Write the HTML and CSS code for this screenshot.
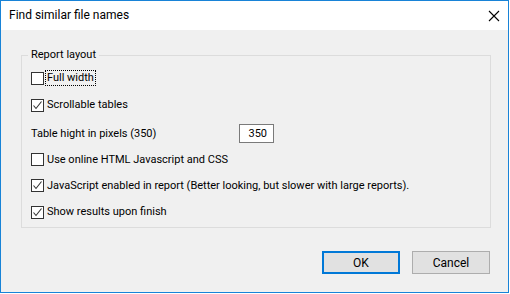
FILE: index.html
```html
<!DOCTYPE html>
<html>
<head>
<meta charset="utf-8">
<link rel="stylesheet" href="styles.css">
</head>
<body>
<div class="window">
  <div class="titlebar">
    <span class="title">Find similar file names</span>
    <svg class="close" width="12" height="12" viewBox="0 0 12 12"><path d="M1 1L11 11M11 1L1 11" stroke="#000" stroke-width="1.1" fill="none"/></svg>
  </div>
  <div class="content">
    <div class="group">
      <span class="legend">Report layout</span>
      <div class="rows">
        <label class="row"><span class="box"></span><span class="text focus">Full width</span></label>
        <label class="row"><span class="box"><svg width="11" height="11" viewBox="0 0 11 11"><path d="M1.5 5.5L4 8.5L9.5 1.5" stroke="#333" stroke-width="1.1" fill="none"/></svg></span><span class="text">Scrollable tables</span></label>
        <div class="row numrow"><span class="numlabel">Table hight in pixels (350)</span><span class="input">350</span></div>
        <label class="row"><span class="box"></span><span class="text">Use online HTML Javascript and CSS</span></label>
        <label class="row"><span class="box"><svg width="11" height="11" viewBox="0 0 11 11"><path d="M1.5 5.5L4 8.5L9.5 1.5" stroke="#333" stroke-width="1.1" fill="none"/></svg></span><span class="text">JavaScript enabled in report (Better looking, but slower with large reports).</span></label>
        <label class="row"><span class="box"><svg width="11" height="11" viewBox="0 0 11 11"><path d="M1.5 5.5L4 8.5L9.5 1.5" stroke="#333" stroke-width="1.1" fill="none"/></svg></span><span class="text">Show results upon finish</span></label>
      </div>
    </div>
    <div class="buttons">
      <span class="btn default">OK</span>
      <span class="btn">Cancel</span>
    </div>
  </div>
</div>
</body>
</html>
```
FILE: styles.css
```css
html, body {
  margin: 0;
  padding: 0;
  background: #ffffff;
}
body {
  font-family: Roboto, "Noto Sans", sans-serif;
  font-size: 11px;
  color: #000;
}
.window {
  width: 507px;
  height: 291px;
  border: 1px solid #1883d7;
  background: #f0f0f0;
  display: flex;
  flex-direction: column;
}
.titlebar {
  height: 29px;
  background: #ffffff;
  display: flex;
  align-items: center;
  justify-content: space-between;
  padding: 0 8px 0 8px;
}
.title {
  font-size: 12px;
  line-height: 29px;
}
.content {
  flex: 1;
  display: flex;
  flex-direction: column;
  padding: 25px 17px 0 20px;
}
.group {
  position: relative;
  height: 171px;
  border: 1px solid #dcdcdc;
}
.legend {
  position: absolute;
  left: 6px;
  top: -9px;
  padding: 0 3px 0 3px;
  background: #f0f0f0;
  line-height: 16px;
}
.rows {
  display: grid;
  grid-template-rows: 26px 28px 28px 25px 27px 26px;
  padding: 9px 0 0 9px;
}
.row {
  display: flex;
  align-items: center;
}
.box {
  width: 11px;
  height: 11px;
  border: 1px solid #333;
  background: #fff;
  display: flex;
  align-items: center;
  justify-content: center;
}
.text {
  margin-left: 2px;
  line-height: 14px;
  padding: 0 1px;
}
.focus {
  outline: 1px dotted #000;
}
.numlabel {
  width: 208px;
}
.input {
  width: 27px;
  height: 17px;
  border: 1px solid #7a7a7a;
  background: #fff;
  text-align: right;
  line-height: 17px;
  padding: 0 6px 0 0;
}
.buttons {
  display: flex;
  justify-content: flex-end;
  gap: 12px;
  margin-top: 23px;
  padding-right: 1px;
}
.btn {
  width: 76px;
  height: 21px;
  border: 1px solid #adadad;
  background: #e1e1e1;
  display: flex;
  align-items: center;
  justify-content: center;
  font-size: 12px;
}
.btn.default {
  width: 74px;
  height: 19px;
  border: 2px solid #0078d7;
}
```
